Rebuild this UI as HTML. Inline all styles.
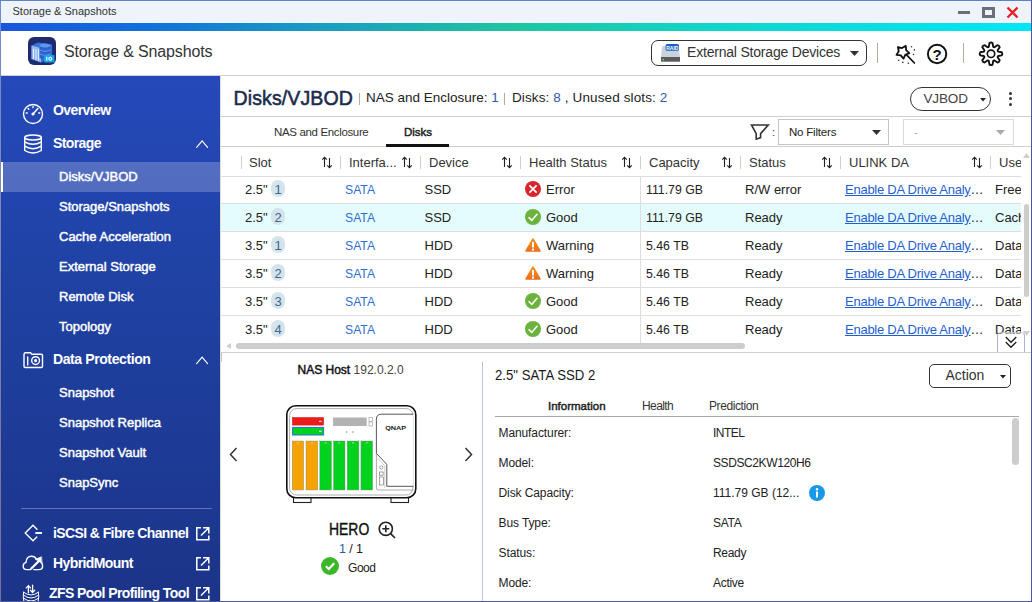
<!DOCTYPE html>
<html><head><meta charset="utf-8">
<style>
*{margin:0;padding:0;box-sizing:border-box}
html,body{width:1032px;height:602px;overflow:hidden;background:#fff}
body{position:relative;font-family:"Liberation Sans",sans-serif;color:#222}
.a{position:absolute}
.t{position:absolute;line-height:1;white-space:nowrap}
.b{font-weight:700}
.sb{-webkit-text-stroke:0.45px #fff}
svg{position:absolute;overflow:visible}
</style></head><body>

<!-- window frame -->
<div class="a" style="left:0;top:0;width:1032px;height:23px;background:#eef3fc"></div>
<div class="t" style="left:12.5px;top:6px;font-size:11px;color:#333">Storage &amp; Snapshots</div>
<!-- window controls -->
<div class="a" style="left:958px;top:11px;width:12px;height:3px;background:#6a7078"></div>
<div class="a" style="left:982px;top:7px;width:13px;height:11px;border:3px solid #6a7078"></div>
<svg style="left:1006px;top:6px" width="13" height="13" viewBox="0 0 13 13"><path d="M1.5 1.5L11.5 11.5M11.5 1.5L1.5 11.5" stroke="#ec1c24" stroke-width="2.3"/></svg>

<div class="a" style="left:0;top:23px;width:1032px;height:8px;background:linear-gradient(90deg,#1a54de 0%,#1070dc 14%,#1a98c4 29%,#1ec6a0 50%,#0fd6cc 70%,#00e6f6 100%)"></div>

<!-- header -->
<div class="a" style="left:0;top:75px;width:1032px;height:1px;background:#cfcfcf"></div>
<div class="t" style="left:64px;top:43.8px;font-size:16px;color:#333;letter-spacing:-0.15px">Storage &amp; Snapshots</div>

<div class="a" style="left:651px;top:40px;width:216px;height:26px;border:1px solid #333;border-radius:7px"></div>
<div class="t" style="left:687px;top:45.4px;font-size:14px;color:#333;letter-spacing:-0.2px">External Storage Devices</div>
<svg style="left:850px;top:51px" width="9" height="5"><path d="M0 0H9L4.5 5Z" fill="#333"/></svg>
<div class="a" style="left:877px;top:43px;width:1px;height:20px;background:#b5ac9c"></div>
<div class="a" style="left:963px;top:43px;width:1px;height:20px;background:#b5ac9c"></div>

<!-- sidebar -->
<div class="a" style="left:0;top:76px;width:220px;height:526px;background:linear-gradient(180deg,#2549ba 0%,#1f41a2 43%,#1b3488 100%)"></div>
<div class="a" style="left:1px;top:162px;width:219px;height:30px;background:rgba(255,255,255,0.22)"></div>
<div class="a" style="left:1px;top:162px;width:2px;height:30px;background:#fff"></div>


<!-- sidebar icons -->
<svg style="left:0;top:76px" width="220" height="526" viewBox="0 76 220 526">
<g fill="none" stroke="#fff" stroke-width="1.4" stroke-linecap="round">
<circle cx="33" cy="114" r="9.5"/>
<path d="M33 114L37 109.5"/><circle cx="33" cy="114" r="0.9" fill="#fff"/>
<path d="M33 106.5V107.5M28.2 108.5L28.8 109.2M26.2 113H27.2M37.8 108.5L37.2 109.2M39.8 113H38.8"/>
<ellipse cx="33" cy="137.5" rx="8.3" ry="2.5"/>
<path d="M24.7 137.5V150.5Q33 155.5 41.3 150.5V137.5M24.7 141.8Q33 146.8 41.3 141.8M24.7 146.2Q33 151.2 41.3 146.2"/>
<path d="M196.6 147.4L202.1 141L207.6 147.4" stroke-width="1.15"/>
<path d="M196.6 363.6L202.1 357.2L207.6 363.6" stroke-width="1.15"/>
<path d="M24 354.5Q24 352.8 25.7 352.8H30.5L32 354.2H41.3Q42.5 354.2 42.5 355.4V366.3Q42.5 367.5 41.3 367.5H25.2Q24 367.5 24 366.3Z"/>
<path d="M27.7 357V365"/>
<circle cx="35.6" cy="360.6" r="3.9"/>
<circle cx="35.6" cy="360.6" r="0.9" fill="#fff"/>
<path d="M37 529.3L33 525.2L25.2 533L33 540.8L36.8 537"/><path d="M35.3 533H42" stroke-width="1.9" stroke-linecap="butt"/>
<path d="M30.5 569.6H26.8Q23.2 569.6 23.2 566.2Q23.2 563.2 26 562.4Q26.5 556.3 31.5 556.3Q35 556.3 36.3 559.2M41 562.2Q42.6 563.5 42.6 566Q42.6 569.6 39 569.6H33.8"/>
<path d="M30.6 569.3L39.2 560.7" stroke-width="2.2" stroke-linecap="butt"/>
<path d="M41.3 556.8L35.4 559.3L41.8 563Z" fill="#fff" stroke-width="0.6"/>
<path d="M28.4 592.8V585.8M26.3 587.9L28.4 585.6L30.5 587.9M32.6 585.2V592.4M30.5 590.3L32.6 592.6L34.7 590.3" stroke-width="1.3"/>
<path d="M23.6 592.2Q31 598 38.4 592.2M23.6 595.2Q31 601 38.4 595.2M23.6 598.2Q31 604 38.4 598.2M23.6 592.2Q22.6 596.8 23.9 601.5M38.4 592.2Q39.4 596.8 38.1 601.5" stroke-width="1"/>
</g>
<g fill="none" stroke="#fff" stroke-width="1.5">
<path d="M201 527.8H196.8V539.8H208.8V535.5M203 527.8H208.8V533.5M208.5 528L201 535.5"/>
<path d="M201 557.8H196.8V569.8H208.8V565.5M203 557.8H208.8V563.5M208.5 558L201 565.5"/>
<path d="M201 587.8H196.8V599.8H208.8V595.5M203 587.8H208.8V593.5M208.5 588L201 595.5"/>
</g>
</svg>
<div class="t b" style="left:53px;top:103px;font-size:14px;color:#fff;letter-spacing:-0.6px">Overview</div>
<div class="t b" style="left:53px;top:136px;font-size:14px;color:#fff;letter-spacing:-0.6px">Storage</div>
<div class="t sb" style="left:59px;top:169.8px;font-size:13px;color:#fff;letter-spacing:0px">Disks/VJBOD</div>
<div class="t sb" style="left:59px;top:199.8px;font-size:13px;color:#fff;letter-spacing:0px">Storage/Snapshots</div>
<div class="t sb" style="left:59px;top:229.8px;font-size:13px;color:#fff;letter-spacing:0px">Cache Acceleration</div>
<div class="t sb" style="left:59px;top:259.8px;font-size:13px;color:#fff;letter-spacing:0px">External Storage</div>
<div class="t sb" style="left:59px;top:289.8px;font-size:13px;color:#fff;letter-spacing:0px">Remote Disk</div>
<div class="t sb" style="left:59px;top:319.8px;font-size:13px;color:#fff;letter-spacing:0px">Topology</div>
<div class="t b" style="left:53px;top:352px;font-size:14px;color:#fff;letter-spacing:-0.4px">Data Protection</div>
<div class="t sb" style="left:59px;top:385.8px;font-size:13px;color:#fff;letter-spacing:0px">Snapshot</div>
<div class="t sb" style="left:59px;top:415.8px;font-size:13px;color:#fff;letter-spacing:0px">Snapshot Replica</div>
<div class="t sb" style="left:59px;top:445.8px;font-size:13px;color:#fff;letter-spacing:0px">Snapshot Vault</div>
<div class="t sb" style="left:59px;top:475.8px;font-size:13px;color:#fff;letter-spacing:0px">SnapSync</div>
<div class="a" style="left:21px;top:508px;width:191px;height:1px;background:rgba(255,255,255,0.3)"></div>
<div class="t b" style="left:53px;top:526px;font-size:14px;color:#fff;letter-spacing:-0.6px">iSCSI &amp; Fibre Channel</div>
<div class="t b" style="left:53px;top:556px;font-size:14px;color:#fff;letter-spacing:-0.6px">HybridMount</div>
<div class="t b" style="left:49px;top:586px;font-size:14px;color:#fff;letter-spacing:-0.6px">ZFS Pool Profiling Tool</div>


<!-- header icons -->
<svg style="left:0;top:0" width="1032" height="80" viewBox="0 0 1032 80">
<path d="M988.81 46.63 L989.48 43.01 Q991.00 42.00 992.52 43.01 L993.19 46.63 Q993.67 47.36 994.52 47.18 L997.56 45.09 Q999.34 45.46 999.71 47.24 L997.62 50.28 Q997.44 51.13 998.17 51.61 L1001.79 52.28 Q1002.80 53.80 1001.79 55.32 L998.17 55.99 Q997.44 56.47 997.62 57.32 L999.71 60.36 Q999.34 62.14 997.56 62.51 L994.52 60.42 Q993.67 60.24 993.19 60.97 L992.52 64.59 Q991.00 65.60 989.48 64.59 L988.81 60.97 Q988.33 60.24 987.48 60.42 L984.44 62.51 Q982.66 62.14 982.29 60.36 L984.38 57.32 Q984.56 56.47 983.83 55.99 L980.21 55.32 Q979.20 53.80 980.21 52.28 L983.83 51.61 Q984.56 51.13 984.38 50.28 L982.29 47.24 Q982.66 45.46 984.44 45.09 L987.48 47.18 Q988.33 47.36 988.81 46.63Z" fill="none" stroke="#111" stroke-width="1.9" stroke-linejoin="round"/>
<circle cx="991" cy="53.8" r="3.7" fill="none" stroke="#111" stroke-width="1.6"/>
<circle cx="937.1" cy="54" r="9.2" fill="none" stroke="#111" stroke-width="1.9"/><text x="937" y="59.8" text-anchor="middle" font-family="Liberation Sans" font-weight="700" font-size="15" fill="#111">?</text>
<path d="M905.79 45.90 L906.11 50.19 L909.30 53.08 L905.31 54.71 L903.55 58.63 L900.77 55.34 L896.49 54.88 L898.76 51.22 L897.88 47.01 L902.06 48.04Z" fill="none" stroke="#111" stroke-width="1.8" stroke-linejoin="round"/>
<path d="M906.6 54.8L914.4 63" stroke="#111" stroke-width="1.7" stroke-linecap="round"/>
<g fill="#333"><circle cx="911.5" cy="46.7" r="0.8"/><circle cx="914.4" cy="49.9" r="0.8"/><circle cx="913.5" cy="54.5" r="0.8"/><circle cx="898.7" cy="60.3" r="0.8"/><circle cx="902.8" cy="62.4" r="0.8"/><circle cx="908.3" cy="63.3" r="0.8"/></g>
<!-- app icon -->
<rect x="28" y="37" width="28" height="28" rx="6" fill="#1f2b6c"/>
<path d="M31.5 45.5L38 42.5L52 44.5V58L41 62.5L31.5 59Z" fill="#3d6fd8"/>
<path d="M31.5 45.5L41 48V62.5L31.5 59Z" fill="#8fb6f2"/>
<path d="M33.5 48.5V58.5M36 49V59.5M38.5 49.5V60.5" stroke="#e6f0ff" stroke-width="1"/>
<ellipse cx="45" cy="46" rx="5.5" ry="2.5" fill="#5a9af0"/>
<path d="M39.5 46V58Q45 61 50.5 58V46Q45 49 39.5 46Z" fill="#2f62d0"/>
<path d="M39.5 50Q45 53 50.5 50M39.5 54Q45 57 50.5 54" stroke="#6aa6f4" stroke-width="0.8" fill="none"/>
<rect x="44" y="55" width="10.5" height="7.5" rx="1" fill="#12a4ee"/>
<path d="M46.8 56.8V60.7M50.3 57.2a1.5 1.5 0 1 0 0.01 0" stroke="#fff" stroke-width="1.1" fill="none"/>
<!-- drive icon -->
<path d="M662 46H678.5L680 57H661Z" fill="#c9d3dc"/>
<rect x="661" y="57" width="19" height="4.7" fill="#5b5b5b"/>
<circle cx="663.2" cy="59.6" r="0.9" fill="#5ee03c"/>
<rect x="665.6" y="44.1" width="13.4" height="6.7" rx="1.6" fill="#1b5fc4"/>
<text x="672.3" y="49.6" text-anchor="middle" font-family="Liberation Sans" font-weight="700" font-size="5" fill="#fff">RAID</text>
</svg>

<!-- main title -->
<div class="t" style="left:233.5px;top:89.3px;font-size:19.5px;color:#1c2b4d;-webkit-text-stroke:0.55px #1c2b4d;letter-spacing:0.12px">Disks/VJBOD</div>
<div class="a" style="left:359px;top:93px;width:1px;height:12px;background:#b5ac9c"></div>
<div class="t" style="left:366px;top:91.3px;font-size:13.5px;color:#222">NAS and Enclosure: <span style="color:#2d5aa6">1</span></div>
<div class="a" style="left:504px;top:93px;width:1px;height:12px;background:#b5ac9c"></div>
<div class="t" style="left:512px;top:91.3px;font-size:13.5px;color:#222;letter-spacing:0.12px">Disks: <span style="color:#2d5aa6">8</span> , Unused slots: <span style="color:#2d5aa6">2</span></div>
<div class="a" style="left:221px;top:116px;width:811px;height:1px;background:#d0d0d0"></div>


<!-- tabs -->
<div class="t" style="left:274px;top:126.5px;font-size:11.5px;color:#333;letter-spacing:-0.35px">NAS and Enclosure</div>
<div class="t" style="left:404px;top:126.5px;font-size:11.5px;color:#222;-webkit-text-stroke:0.45px #222">Disks</div>
<div class="a" style="left:221px;top:146px;width:810px;height:1px;background:#cfcfcf"></div>
<div class="a" style="left:386px;top:144px;width:63px;height:3px;background:#111"></div>
<!-- filter -->
<svg style="left:750px;top:124px" width="20" height="17" viewBox="0 0 20 17"><path d="M1.5 1H18.3L10.6 9.6V13.6L6.2 15.2V9.6Z" fill="none" stroke="#333" stroke-width="1.6" stroke-linejoin="miter"/></svg>
<div class="t" style="left:772px;top:127px;font-size:11px;color:#333">:</div>
<div class="a" style="left:778px;top:119px;width:111px;height:26px;border:1px solid #c4c4c4"></div>
<div class="t" style="left:789px;top:126.5px;font-size:11.5px;color:#222;letter-spacing:-0.2px">No Filters</div>
<svg style="left:872px;top:130px" width="9" height="5"><path d="M0 0H9L4.5 5Z" fill="#333"/></svg>
<div class="a" style="left:903px;top:119px;width:111px;height:26px;border:1px solid #dadada"></div>
<div class="t" style="left:914px;top:126.5px;font-size:11.5px;color:#aaa">-</div>
<svg style="left:996px;top:130px" width="9" height="5"><path d="M0 0H9L4.5 5Z" fill="#aaa"/></svg>
<!-- VJBOD pill -->
<div class="a" style="left:910px;top:87px;width:81px;height:24px;border:1px solid #333;border-radius:12px"></div>
<div class="t" style="left:923.5px;top:92px;font-size:13.5px;color:#444;letter-spacing:-0.15px">VJBOD</div>
<svg style="left:980px;top:98px" width="6" height="4"><path d="M0 0H6L3 3.5Z" fill="#222"/></svg>
<div class="a" style="left:1008.5px;top:91.7px;width:3px;height:3px;border-radius:2px;background:#333"></div>
<div class="a" style="left:1008.5px;top:97.4px;width:3px;height:3px;border-radius:2px;background:#333"></div>
<div class="a" style="left:1008.5px;top:102.8px;width:3px;height:3px;border-radius:2px;background:#333"></div>

<!-- table header -->
<div class="t" style="left:249px;top:156px;font-size:13px;color:#333">Slot</div>
<div class="t" style="left:349px;top:156px;font-size:13px;color:#333">Interfa...</div>
<div class="t" style="left:429px;top:156px;font-size:13px;color:#333">Device</div>
<div class="t" style="left:529px;top:156px;font-size:13px;color:#333">Health Status</div>
<div class="t" style="left:649px;top:156px;font-size:13px;color:#333">Capacity</div>
<div class="t" style="left:749px;top:156px;font-size:13px;color:#333">Status</div>
<div class="t" style="left:849px;top:156px;font-size:13px;color:#333">ULINK DA</div>
<div class="t" style="left:999px;top:156px;font-size:13px;color:#333;width:22px;overflow:hidden">Use</div>
<div class="a" style="left:241px;top:156px;width:1px;height:13px;background:#cfcfcf"></div>
<div class="a" style="left:340px;top:156px;width:1px;height:13px;background:#cfcfcf"></div>
<div class="a" style="left:420px;top:156px;width:1px;height:13px;background:#cfcfcf"></div>
<div class="a" style="left:520px;top:156px;width:1px;height:13px;background:#cfcfcf"></div>
<div class="a" style="left:640px;top:156px;width:1px;height:13px;background:#cfcfcf"></div>
<div class="a" style="left:740px;top:156px;width:1px;height:13px;background:#cfcfcf"></div>
<div class="a" style="left:840px;top:156px;width:1px;height:13px;background:#cfcfcf"></div>
<div class="a" style="left:990px;top:156px;width:1px;height:13px;background:#cfcfcf"></div>
<svg style="left:321px;top:156px" width="12" height="13" viewBox="0 0 12 13"><path d="M3.5 11V1.3M1.2 3.6L3.5 1.3L5.8 3.6M8.5 2V11.7M6.2 9.4L8.5 11.7L10.8 9.4" fill="none" stroke="#222" stroke-width="1.1"/></svg>
<svg style="left:401px;top:156px" width="12" height="13" viewBox="0 0 12 13"><path d="M3.5 11V1.3M1.2 3.6L3.5 1.3L5.8 3.6M8.5 2V11.7M6.2 9.4L8.5 11.7L10.8 9.4" fill="none" stroke="#222" stroke-width="1.1"/></svg>
<svg style="left:501px;top:156px" width="12" height="13" viewBox="0 0 12 13"><path d="M3.5 11V1.3M1.2 3.6L3.5 1.3L5.8 3.6M8.5 2V11.7M6.2 9.4L8.5 11.7L10.8 9.4" fill="none" stroke="#222" stroke-width="1.1"/></svg>
<svg style="left:621px;top:156px" width="12" height="13" viewBox="0 0 12 13"><path d="M3.5 11V1.3M1.2 3.6L3.5 1.3L5.8 3.6M8.5 2V11.7M6.2 9.4L8.5 11.7L10.8 9.4" fill="none" stroke="#222" stroke-width="1.1"/></svg>
<svg style="left:721px;top:156px" width="12" height="13" viewBox="0 0 12 13"><path d="M3.5 11V1.3M1.2 3.6L3.5 1.3L5.8 3.6M8.5 2V11.7M6.2 9.4L8.5 11.7L10.8 9.4" fill="none" stroke="#222" stroke-width="1.1"/></svg>
<svg style="left:821px;top:156px" width="12" height="13" viewBox="0 0 12 13"><path d="M3.5 11V1.3M1.2 3.6L3.5 1.3L5.8 3.6M8.5 2V11.7M6.2 9.4L8.5 11.7L10.8 9.4" fill="none" stroke="#222" stroke-width="1.1"/></svg>
<svg style="left:971px;top:156px" width="12" height="13" viewBox="0 0 12 13"><path d="M3.5 11V1.3M1.2 3.6L3.5 1.3L5.8 3.6M8.5 2V11.7M6.2 9.4L8.5 11.7L10.8 9.4" fill="none" stroke="#222" stroke-width="1.1"/></svg>
<!--TABLE-->
<div class="a" style="left:221px;top:204px;width:800px;height:27px;background:#e5fcfc"></div>
<div class="a" style="left:221px;top:176px;width:800px;height:1px;background:#dedede"></div>
<div class="a" style="left:221px;top:203px;width:800px;height:1px;background:#dedede"></div>
<div class="a" style="left:221px;top:231px;width:800px;height:1px;background:#dedede"></div>
<div class="a" style="left:221px;top:259px;width:800px;height:1px;background:#dedede"></div>
<div class="a" style="left:221px;top:287px;width:800px;height:1px;background:#dedede"></div>
<div class="a" style="left:221px;top:315px;width:800px;height:1px;background:#dedede"></div>
<div class="a" style="left:640px;top:177px;width:1px;height:166px;background:#dedede"></div>
<div class="t" style="left:245px;top:183px;font-size:13px;color:#222">2.5"</div>
<div class="a" style="left:271px;top:180px;width:14px;height:17px;border-radius:7px;background:#d4e3ec"></div>
<div class="t" style="left:271px;top:183px;width:14px;text-align:center;font-size:13px;color:#3a6a8c">1</div>
<div class="t" style="left:345px;top:183.65px;font-size:12.2px;color:#2f6fcf">SATA</div>
<div class="t" style="left:424.5px;top:183px;font-size:13px;color:#222">SSD</div>
<svg style="left:525px;top:181px" width="16" height="16" viewBox="0 0 16 16"><circle cx="8" cy="8" r="8" fill="#d7262e"/><path d="M4.4 4.4L11.6 11.6M11.6 4.4L4.4 11.6" stroke="#fff" stroke-width="1.7"/></svg>
<div class="t" style="left:546px;top:183px;font-size:13px;color:#222">Error</div>
<div class="t" style="left:646px;top:183.60px;font-size:12.3px;color:#222">111.79 GB</div>
<div class="t" style="left:745px;top:183px;font-size:13px;color:#222">R/W error</div>
<div class="t" style="left:845px;top:183px;font-size:13px;color:#1f5fd0;letter-spacing:-0.25px"><span style="text-decoration:underline">Enable DA Drive Analy</span><span style="color:#222">…</span></div>
<div class="t" style="left:995px;top:183px;font-size:13px;color:#222;width:26px;overflow:hidden">Free</div>
<div class="t" style="left:245px;top:211px;font-size:13px;color:#222">2.5"</div>
<div class="a" style="left:271px;top:208px;width:14px;height:17px;border-radius:7px;background:#d4e3ec"></div>
<div class="t" style="left:271px;top:211px;width:14px;text-align:center;font-size:13px;color:#3a6a8c">2</div>
<div class="t" style="left:345px;top:211.65px;font-size:12.2px;color:#2f6fcf">SATA</div>
<div class="t" style="left:424.5px;top:211px;font-size:13px;color:#222">SSD</div>
<svg style="left:525px;top:209px" width="16" height="16" viewBox="0 0 16 16"><circle cx="8" cy="8" r="8" fill="#6bb33c"/><path d="M3.6 8.2L6.8 11.4L12.4 4.8" stroke="#fff" stroke-width="1.6" fill="none"/></svg>
<div class="t" style="left:546px;top:211px;font-size:13px;color:#222">Good</div>
<div class="t" style="left:646px;top:211.60px;font-size:12.3px;color:#222">111.79 GB</div>
<div class="t" style="left:745px;top:211px;font-size:13px;color:#222">Ready</div>
<div class="t" style="left:845px;top:211px;font-size:13px;color:#1f5fd0;letter-spacing:-0.25px"><span style="text-decoration:underline">Enable DA Drive Analy</span><span style="color:#222">…</span></div>
<div class="t" style="left:995px;top:211px;font-size:13px;color:#222;width:26px;overflow:hidden">Cache</div>
<div class="t" style="left:245px;top:239px;font-size:13px;color:#222">3.5"</div>
<div class="a" style="left:271px;top:236px;width:14px;height:17px;border-radius:7px;background:#d4e3ec"></div>
<div class="t" style="left:271px;top:239px;width:14px;text-align:center;font-size:13px;color:#3a6a8c">1</div>
<div class="t" style="left:345px;top:239.65px;font-size:12.2px;color:#2f6fcf">SATA</div>
<div class="t" style="left:424.5px;top:239px;font-size:13px;color:#222">HDD</div>
<svg style="left:525px;top:237px" width="16" height="16" viewBox="0 0 16 16"><defs><linearGradient id="wg237" x1="0" y1="0" x2="0" y2="1"><stop offset="0" stop-color="#f5961a"/><stop offset="1" stop-color="#ec6c1e"/></linearGradient></defs><path d="M8 1.2Q8.6 1.2 9 1.9L15.6 13.6Q16 14.8 14.8 14.8H1.2Q0 14.8 0.4 13.6L7 1.9Q7.4 1.2 8 1.2Z" fill="url(#wg237)"/><rect x="7" y="5" width="2" height="5.5" fill="#fff"/><rect x="7" y="11.6" width="2" height="2" fill="#fff"/></svg>
<div class="t" style="left:546px;top:239px;font-size:13px;color:#222">Warning</div>
<div class="t" style="left:646px;top:239.60px;font-size:12.3px;color:#222">5.46 TB</div>
<div class="t" style="left:745px;top:239px;font-size:13px;color:#222">Ready</div>
<div class="t" style="left:845px;top:239px;font-size:13px;color:#1f5fd0;letter-spacing:-0.25px"><span style="text-decoration:underline">Enable DA Drive Analy</span><span style="color:#222">…</span></div>
<div class="t" style="left:995px;top:239px;font-size:13px;color:#222;width:26px;overflow:hidden">Data</div>
<div class="t" style="left:245px;top:267px;font-size:13px;color:#222">3.5"</div>
<div class="a" style="left:271px;top:264px;width:14px;height:17px;border-radius:7px;background:#d4e3ec"></div>
<div class="t" style="left:271px;top:267px;width:14px;text-align:center;font-size:13px;color:#3a6a8c">2</div>
<div class="t" style="left:345px;top:267.65px;font-size:12.2px;color:#2f6fcf">SATA</div>
<div class="t" style="left:424.5px;top:267px;font-size:13px;color:#222">HDD</div>
<svg style="left:525px;top:265px" width="16" height="16" viewBox="0 0 16 16"><defs><linearGradient id="wg265" x1="0" y1="0" x2="0" y2="1"><stop offset="0" stop-color="#f5961a"/><stop offset="1" stop-color="#ec6c1e"/></linearGradient></defs><path d="M8 1.2Q8.6 1.2 9 1.9L15.6 13.6Q16 14.8 14.8 14.8H1.2Q0 14.8 0.4 13.6L7 1.9Q7.4 1.2 8 1.2Z" fill="url(#wg265)"/><rect x="7" y="5" width="2" height="5.5" fill="#fff"/><rect x="7" y="11.6" width="2" height="2" fill="#fff"/></svg>
<div class="t" style="left:546px;top:267px;font-size:13px;color:#222">Warning</div>
<div class="t" style="left:646px;top:267.60px;font-size:12.3px;color:#222">5.46 TB</div>
<div class="t" style="left:745px;top:267px;font-size:13px;color:#222">Ready</div>
<div class="t" style="left:845px;top:267px;font-size:13px;color:#1f5fd0;letter-spacing:-0.25px"><span style="text-decoration:underline">Enable DA Drive Analy</span><span style="color:#222">…</span></div>
<div class="t" style="left:995px;top:267px;font-size:13px;color:#222;width:26px;overflow:hidden">Data</div>
<div class="t" style="left:245px;top:295px;font-size:13px;color:#222">3.5"</div>
<div class="a" style="left:271px;top:292px;width:14px;height:17px;border-radius:7px;background:#d4e3ec"></div>
<div class="t" style="left:271px;top:295px;width:14px;text-align:center;font-size:13px;color:#3a6a8c">3</div>
<div class="t" style="left:345px;top:295.65px;font-size:12.2px;color:#2f6fcf">SATA</div>
<div class="t" style="left:424.5px;top:295px;font-size:13px;color:#222">HDD</div>
<svg style="left:525px;top:293px" width="16" height="16" viewBox="0 0 16 16"><circle cx="8" cy="8" r="8" fill="#6bb33c"/><path d="M3.6 8.2L6.8 11.4L12.4 4.8" stroke="#fff" stroke-width="1.6" fill="none"/></svg>
<div class="t" style="left:546px;top:295px;font-size:13px;color:#222">Good</div>
<div class="t" style="left:646px;top:295.60px;font-size:12.3px;color:#222">5.46 TB</div>
<div class="t" style="left:745px;top:295px;font-size:13px;color:#222">Ready</div>
<div class="t" style="left:845px;top:295px;font-size:13px;color:#1f5fd0;letter-spacing:-0.25px"><span style="text-decoration:underline">Enable DA Drive Analy</span><span style="color:#222">…</span></div>
<div class="t" style="left:995px;top:295px;font-size:13px;color:#222;width:26px;overflow:hidden">Data</div>
<div class="t" style="left:245px;top:323px;font-size:13px;color:#222">3.5"</div>
<div class="a" style="left:271px;top:320px;width:14px;height:17px;border-radius:7px;background:#d4e3ec"></div>
<div class="t" style="left:271px;top:323px;width:14px;text-align:center;font-size:13px;color:#3a6a8c">4</div>
<div class="t" style="left:345px;top:323.65px;font-size:12.2px;color:#2f6fcf">SATA</div>
<div class="t" style="left:424.5px;top:323px;font-size:13px;color:#222">HDD</div>
<svg style="left:525px;top:321px" width="16" height="16" viewBox="0 0 16 16"><circle cx="8" cy="8" r="8" fill="#6bb33c"/><path d="M3.6 8.2L6.8 11.4L12.4 4.8" stroke="#fff" stroke-width="1.6" fill="none"/></svg>
<div class="t" style="left:546px;top:323px;font-size:13px;color:#222">Good</div>
<div class="t" style="left:646px;top:323.60px;font-size:12.3px;color:#222">5.46 TB</div>
<div class="t" style="left:745px;top:323px;font-size:13px;color:#222">Ready</div>
<div class="t" style="left:845px;top:323px;font-size:13px;color:#1f5fd0;letter-spacing:-0.25px"><span style="text-decoration:underline">Enable DA Drive Analy</span><span style="color:#222">…</span></div>
<div class="t" style="left:995px;top:323px;font-size:13px;color:#222;width:26px;overflow:hidden">Data</div>
<!--/TABLE-->

<!-- left border line -->
<div class="a" style="left:220px;top:76px;width:1px;height:525px;background:#e0dcd6"></div><div class="a" style="left:221px;top:352px;width:1px;height:10px;background:#c8c8c8"></div>
<!-- scrollbars -->
<div class="a" style="left:236px;top:343px;width:509px;height:6px;border-radius:3px;background:#cdcdcd"></div>
<svg style="left:226px;top:343px" width="5" height="6"><path d="M5 0V6L0 3Z" fill="#cfcfcf"/></svg>
<svg style="left:1023px;top:153px" width="7" height="5"><path d="M0 5H7L3.5 0Z" fill="#cfcfcf"/></svg>
<div class="a" style="left:1023.5px;top:204px;width:5px;height:92.5px;border-radius:3px;background:#cdcdcd"></div>
<svg style="left:1023px;top:331px" width="7" height="5"><path d="M0 0H7L3.5 5Z" fill="#cfcfcf"/></svg>
<div class="a" style="left:221px;top:352px;width:810px;height:1px;background:#cfcfcf"></div>
<div class="a" style="left:997px;top:331.5px;width:28px;height:20.5px;border:1px solid #aab4d4;border-bottom:none;border-top-color:rgba(170,180,212,0.55);border-radius:4px 4px 0 0;background:rgba(255,255,255,0.45)"></div>
<svg style="left:1005px;top:335.5px" width="12" height="13" viewBox="0 0 12 13"><path d="M0.7 1L6 6.3L11.3 1M0.7 6L6 11.3L11.3 6" fill="none" stroke="#1a1a1a" stroke-width="1.25"/></svg>

<!-- bottom-left panel -->
<div class="t" style="left:297.5px;top:364.2px;font-size:12px;color:#111"><span style="-webkit-text-stroke:0.45px #111">NAS Host</span> <span style="color:#444">192.0.2.0</span></div>
<svg style="left:229px;top:446.5px" width="9" height="15" viewBox="0 0 9 15"><path d="M7.5 1L1.5 7.5L7.5 14" fill="none" stroke="#333" stroke-width="1.5"/></svg>
<svg style="left:464px;top:446.5px" width="9" height="15" viewBox="0 0 9 15"><path d="M1.5 1L7.5 7.5L1.5 14" fill="none" stroke="#333" stroke-width="1.5"/></svg>
<svg style="left:280px;top:395px" width="145" height="110" viewBox="280 395 145 110"><rect x="293.5" y="497" width="17.5" height="5.5" fill="#fff" stroke="#222" stroke-width="1.1"/><rect x="391" y="497" width="17.5" height="5.5" fill="#fff" stroke="#222" stroke-width="1.1"/><rect x="286.8" y="405.8" width="129" height="92" rx="9" fill="#fff" stroke="#111" stroke-width="1.6"/><rect x="289.6" y="408.6" width="123.4" height="86.4" rx="7" fill="none" stroke="#9a9a9a" stroke-width="0.8"/><rect x="292.4" y="417.5" width="31.2" height="7.6" fill="#ee1b1b" stroke="#c01010" stroke-width="0.5"/><rect x="319" y="420.8" width="2.5" height="1" fill="#fff"/><rect x="292.6" y="427.4" width="31" height="7.6" fill="#00d01e" stroke="#2b6fe0" stroke-width="1"/><rect x="319" y="430.8" width="2.5" height="1" fill="#fff"/><rect x="333" y="417.5" width="33.7" height="8.5" fill="#b3b3b3"/><rect x="369" y="417.5" width="3.6" height="4" fill="#fff" stroke="#999" stroke-width="0.6"/><rect x="369" y="422" width="3.6" height="4" fill="#fff" stroke="#999" stroke-width="0.6"/><circle cx="346.7" cy="432" r="0.7" fill="#777"/><circle cx="353" cy="432" r="0.7" fill="#777"/><rect x="292.2" y="441" width="11.5" height="49" fill="#f5a300" stroke="#8a8a8a" stroke-width="0.4"/><rect x="296.9" y="442.5" width="2" height="0.8" fill="#ddd"/><rect x="306" y="441" width="11.8" height="49" fill="#f5a300" stroke="#8a8a8a" stroke-width="0.4"/><rect x="310.9" y="442.5" width="2" height="0.8" fill="#ddd"/><rect x="319.8" y="441" width="11.7" height="49" fill="#00d21e" stroke="#8a8a8a" stroke-width="0.4"/><rect x="324.6" y="442.5" width="2" height="0.8" fill="#ddd"/><rect x="333.5" y="441" width="11.5" height="49" fill="#00d21e" stroke="#8a8a8a" stroke-width="0.4"/><rect x="338.2" y="442.5" width="2" height="0.8" fill="#ddd"/><rect x="347.2" y="441" width="11.7" height="49" fill="#00d21e" stroke="#8a8a8a" stroke-width="0.4"/><rect x="352.0" y="442.5" width="2" height="0.8" fill="#ddd"/><rect x="360.9" y="441" width="11.7" height="49" fill="#00d21e" stroke="#8a8a8a" stroke-width="0.4"/><rect x="365.8" y="442.5" width="2" height="0.8" fill="#ddd"/><path d="M413.3 414.2H381.4Q376.4 414.2 376.4 419.2V453.4L386.8 464.4V486.3H413.3" fill="#fff" stroke="#444" stroke-width="0.9"/><path d="M376.4 453.4V488Q376.4 490 378.4 490H413.3" fill="none" stroke="#888" stroke-width="0.7"/><path d="M377.8 458L384.8 466V488" fill="none" stroke="#aaa" stroke-width="0.6"/><circle cx="381.3" cy="467.5" r="1.6" fill="none" stroke="#666" stroke-width="0.6"/><rect x="379.5" y="472" width="3.6" height="3.2" fill="none" stroke="#666" stroke-width="0.6"/><rect x="379.3" y="477" width="4" height="8" fill="none" stroke="#666" stroke-width="0.6"/><text x="385.2" y="429.5" font-family="Liberation Sans" font-weight="700" font-size="5.6" textLength="21" lengthAdjust="spacingAndGlyphs" fill="#222">QNAP</text></svg>
<div class="t" style="left:329px;top:521.5px;font-size:16px;color:#111;-webkit-text-stroke:0.4px #111;transform:scaleX(0.87);transform-origin:0 0">HERO</div>
<svg style="left:378px;top:521px" width="18" height="18" viewBox="0 0 18 18"><circle cx="7.8" cy="7.8" r="6.6" fill="none" stroke="#222" stroke-width="1.6"/><path d="M7.8 4.3V11.3M4.3 7.8H11.3M12.6 12.6L17 17" stroke="#222" stroke-width="1.6" fill="none"/></svg>
<div class="t" style="left:339px;top:543.2px;font-size:12.5px;color:#222;letter-spacing:-0.1px"><span style="color:#2d5aa6">1</span> / 1</div>
<svg style="left:321px;top:557px" width="18" height="18" viewBox="0 0 18 18"><circle cx="9" cy="9" r="9" fill="#3cb72a"/><path d="M4.8 9.3L7.8 12L13.2 6.3" stroke="#fff" stroke-width="2.2" fill="none"/></svg>
<div class="t" style="left:348px;top:561.5px;font-size:12px;color:#222;letter-spacing:-0.45px">Good</div>

<!-- bottom-right panel -->
<div class="a" style="left:482px;top:362px;width:1px;height:240px;background:#bcc3dc"></div>
<div class="t" style="left:494.6px;top:368.3px;font-size:14.5px;color:#1a1a1a;transform:scaleX(0.91);transform-origin:0 0">2.5" SATA SSD 2</div>
<div class="a" style="left:929px;top:364px;width:82px;height:24px;border:1px solid #333;border-radius:5px"></div>
<div class="t" style="left:945.5px;top:367.9px;font-size:14px;color:#333">Action</div>
<svg style="left:1000px;top:375px" width="6" height="4"><path d="M0 0H6L3 3.5Z" fill="#222"/></svg>
<div class="t" style="left:548px;top:400.5px;font-size:11.5px;color:#222;-webkit-text-stroke:0.45px #222">Information</div>
<div class="t" style="left:642px;top:400px;font-size:12px;color:#333;letter-spacing:-0.6px">Health</div>
<div class="t" style="left:709px;top:400px;font-size:12px;color:#333;letter-spacing:-0.4px">Prediction</div>
<div class="a" style="left:495px;top:416px;width:524px;height:1px;background:#a8a8a8"></div>
<div class="a" style="left:1011.5px;top:418px;width:7px;height:47px;border-radius:3.5px;background:#cdcdcd"></div>
<div class="t" style="left:498.5px;top:426.84px;font-size:12px;color:#222;letter-spacing:-0.1px">Manufacturer:</div>
<div class="t" style="left:713px;top:426.84px;font-size:12px;color:#222;letter-spacing:-0.5px">INTEL</div>
<div class="t" style="left:498.5px;top:456.84px;font-size:12px;color:#222;letter-spacing:-0.1px">Model:</div>
<div class="t" style="left:713px;top:456.84px;font-size:12px;color:#222;letter-spacing:-0.4px">SSDSC2KW120H6</div>
<div class="t" style="left:498.5px;top:486.84px;font-size:12px;color:#222;letter-spacing:-0.1px">Disk Capacity:</div>
<div class="t" style="left:713px;top:486.84px;font-size:12px;color:#222;letter-spacing:0px">111.79 GB (12...</div>
<div class="t" style="left:498.5px;top:516.84px;font-size:12px;color:#222;letter-spacing:-0.1px">Bus Type:</div>
<div class="t" style="left:713px;top:516.84px;font-size:12px;color:#222;letter-spacing:-0.3px">SATA</div>
<div class="t" style="left:498.5px;top:546.84px;font-size:12px;color:#222;letter-spacing:-0.1px">Status:</div>
<div class="t" style="left:713px;top:546.84px;font-size:12px;color:#222;letter-spacing:-0.3px">Ready</div>
<div class="t" style="left:498.5px;top:576.84px;font-size:12px;color:#222;letter-spacing:-0.1px">Mode:</div>
<div class="t" style="left:713px;top:576.84px;font-size:12px;color:#222;letter-spacing:-0.3px">Active</div>
<svg style="left:809px;top:485px" width="16" height="16" viewBox="0 0 16 16"><circle cx="8" cy="8" r="8" fill="#1898e6"/><rect x="7" y="6.5" width="2" height="6" fill="#fff"/><circle cx="8" cy="4.3" r="1.2" fill="#fff"/></svg>

<!-- window borders -->
<div class="a" style="left:0;top:0;width:1px;height:602px;background:linear-gradient(180deg,#6a8ed0 0%,#8088b8 30%,#8080a8 50%,#7a6e9e 100%)"></div>
<div class="a" style="left:0;top:0;width:1032px;height:1px;background:#5e82c8"></div>
<div class="a" style="left:1031px;top:0;width:1px;height:602px;background:#4d55a0"></div>
<div class="a" style="left:0;top:601px;width:1032px;height:1px;background:#525a9c"></div>
</body></html>
